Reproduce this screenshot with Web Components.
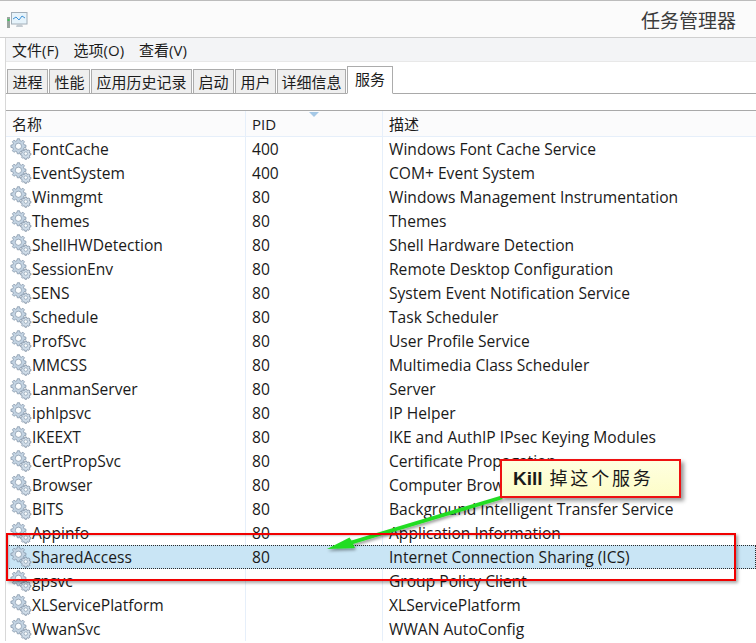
<!DOCTYPE html>
<html>
<head>
<meta charset="utf-8">
<title>任务管理器</title>
<style>
  html, body { margin: 0; padding: 0; background: #fff; height: 100%; overflow: hidden; }
</style>
</head>
<body>
<task-manager></task-manager>

<template id="gear-tpl">
  <svg width="22" height="22" viewBox="0 0 24 24">
    <g fill="#c3d3e2" stroke="#7d90a4" stroke-width=".8">
      <path d="M8 .8h2.400l.4 2 1.600.7 1.700-1.100 1.700 1.700-1.100 1.700.7 1.600 2 .4v2.400l-2 .4-.7 1.600 1.100 1.700-1.700 1.700-1.700-1.100-1.600.7-.4 2H8l-.4-2-1.600-.7-1.700 1.100-1.700-1.700 1.100-1.700-.7-1.600-2-.4V7.800l2-.4.7-1.600-1.100-1.700 1.700-1.700 1.700 1.100 1.600-.7z"/>
    </g>
    <circle cx="9.200" cy="9" r="3.400" fill="#fbfdfe" stroke="#8496a9" stroke-width=".8"/>
    <g fill="#cfdce8" stroke="#74879b" stroke-width=".8" transform="translate(1 1)">
      <path d="M15.300 11h1.800l.3 1.300 1 .4 1.100-.7 1.300 1.300-.7 1.100.4 1 1.300.3v1.800l-1.300.3-.4 1 .7 1.100-1.300 1.300-1.100-.7-1 .4-.3 1.300h-1.800l-.3-1.300-1-.4-1.100.7-1.300-1.300.7-1.100-.4-1-1.300-.3v-1.800l1.300-.3.4-1-.7-1.100 1.300-1.300 1.100.7 1-.4z"/>
    </g>
    <circle cx="17.200" cy="17" r="1.900" fill="#fbfdfe" stroke="#8496a9" stroke-width=".7"/>
  </svg>
</template>

<script>
const CJK = '"Noto Sans CJK SC", sans-serif';
const UI_FONT = `"Open Sans", ${CJK}`;

class TitleBar extends HTMLElement {
  constructor() {
    super();
    const shadow = this.attachShadow({ mode: 'open' });
    shadow.innerHTML = `
      <style>
        :host {
          display: flex;
          box-sizing: border-box;
          height: 38px;
          align-items: center;
          justify-content: space-between;
          padding: 0 20px 0 7px;
          background: #fbfbfb;
          border-top: 1px solid #bcbcbc;
          border-bottom: 1px solid #cfcfcf;
        }
        svg { display: block; margin-top: 1px; }
        span { font: 19px/1 ${CJK}; color: #3c3c3c; }
      </style>
      <svg width="21" height="18" viewBox="0 0 21 18">
        <rect x="0" y="6" width="3" height="11" fill="#9aa5a0"/>
        <rect x=".5" y="8" width="2" height="2" fill="#3fc45a"/>
        <rect x="4.500" y="1.500" width="15.500" height="11.500" fill="#e6f3fb" stroke="#a2aeb8"/>
        <path d="M6 8l3-2 3 3 3-4 3 2" fill="none" stroke="#3f93d8" stroke-width="1"/>
        <path d="M10 13h5l1 3H9z" fill="#c5ccd2"/>
      </svg>
      <span><slot></slot></span>
    `;
  }
}

class MenuBar extends HTMLElement {
  constructor() {
    super();
    const shadow = this.attachShadow({ mode: 'open' });
    shadow.innerHTML = `
      <style>
        :host {
          display: flex;
          box-sizing: border-box;
          height: 24px;
          gap: 15px;
          align-items: center;
          padding: 2px 0 0 6px;
          background: #f3f4f6;
          border-bottom: 1px solid #e8e8e8;
          font: 15px/1 ${UI_FONT};
          color: #1c1c1c;
        }
      </style>
      <slot></slot>
    `;
  }
}

class TabStrip extends HTMLElement {
  constructor() {
    super();
    const shadow = this.attachShadow({ mode: 'open' });
    shadow.innerHTML = `
      <style>
        :host {
          display: flex;
          box-sizing: border-box;
          height: 32px;
          align-items: flex-end;
          gap: 1px;
          padding-left: 1px;
          border-bottom: 1px solid #a9a9a9;
          background: #fff;
        }
      </style>
      <slot></slot>
    `;
  }
}

class TabItem extends HTMLElement {
  constructor() {
    super();
    const shadow = this.attachShadow({ mode: 'open' });
    shadow.innerHTML = `
      <style>
        :host {
          display: flex;
          box-sizing: border-box;
          height: 25px;
          margin-bottom: -1px;
          align-items: center;
          justify-content: center;
          background: #efefef;
          border: 1px solid #acacac;
          font: 15px/1 ${CJK};
          color: #1c1c1c;
        }
        :host([active]) {
          height: 28px;
          background: #fff;
          border-bottom-color: #fff;
          padding-bottom: 3px;
        }
      </style>
      <slot></slot>
    `;
  }
}

class HeaderRow extends HTMLElement {
  constructor() {
    super();
    const shadow = this.attachShadow({ mode: 'open' });
    shadow.innerHTML = `
      <style>
        :host {
          display: grid;
          grid-template-columns: 239px 137px 1fr;
          box-sizing: border-box;
          height: 27px;
          margin-top: 16px;
          background: #fbfbfc;
          border-top: 1px solid #a9a9a9;
          border-bottom: 1px solid #e6effa;
          font: 15px/27px ${UI_FONT};
          color: #1c1c1c;
        }
        div { height: 25px; padding-left: 6px; position: relative; }
        div + div { border-left: 1px solid #e6effa; }
        i {
          position: absolute; left: 63px; top: 1px;
          border: 5px solid transparent; border-top-color: #a5c8e6; border-bottom: 0;
        }
      </style>
      <div>名称</div><div>PID<i></i></div><div>描述</div>
    `;
  }
}

class SvcRow extends HTMLElement {
  constructor() {
    super();
    const shadow = this.attachShadow({ mode: 'open' });
    shadow.innerHTML = `
      <style>
        :host {
          display: grid;
          grid-template-columns: 239px 137px 1fr;
          box-sizing: border-box;
          height: 24px;
          font: 15.600px/24px ${UI_FONT};
          color: #1a1a1a;
          white-space: nowrap;
        }
        :host([selected]) {
          background: #c9e5f5;
          outline: 1px dotted #2a2a2a;
          outline-offset: -1px;
          margin-left: 1px;
          grid-template-columns: 238px 137px 1fr;
        }
        .name { display: flex; align-items: center; padding-left: 4px; }
        :host([selected]) .name { padding-left: 3px; }
        .name svg { display: block; flex: none; }
        .pid, .desc { padding-left: 6px; border-left: 1px solid #e6effa; }
        :host([selected]) .pid, :host([selected]) .desc { border-left-color: transparent; }
      </style>
      <div class="name"></div><div class="pid"></div><div class="desc"></div>
    `;
    const gear = document.getElementById('gear-tpl').content.cloneNode(true);
    shadow.querySelector('.name').appendChild(gear);
    this._shadow = shadow;
  }
  connectedCallback() {
    const name = document.createElement('span');
    name.textContent = this.getAttribute('name');
    this._shadow.querySelector('.name').appendChild(name);
    this._shadow.querySelector('.pid').textContent = this.getAttribute('pid') || '';
    this._shadow.querySelector('.desc').textContent = this.getAttribute('desc') || '';
  }
}

// callout + red frame + arrow drawn over the screenshot
class MarkupLayer extends HTMLElement {
  constructor() {
    super();
    const shadow = this.attachShadow({ mode: 'open' });
    shadow.innerHTML = `
      <style>
        :host { position: absolute; inset: 0; display: block; pointer-events: none; }
        .frame {
          position: absolute; left: 6px; top: 533px; width: 730px; height: 48px;
          box-sizing: border-box;
          border: 2px solid #f00000;
          box-shadow: 2px 2px 3px rgba(0,0,0,.35), inset 1px 1px 2px rgba(0,0,0,.2);
        }
        .note {
          position: absolute; left: 500px; top: 459px; width: 181px; height: 39px;
          box-sizing: border-box;
          border: 2px solid #ee1111;
          background: linear-gradient(#ffffe0, #fdfdc8);
          box-shadow: 3px 3px 4px rgba(0,0,0,.4);
          display: flex; align-items: center; padding-left: 11px;
          font: 18px/1 "Liberation Sans", ${CJK};
          color: #1a1a1a;
        }
        .note b { font-size: 19px; font-weight: bold; margin-right: 7px; }
        .note span { letter-spacing: 2.800px; }
        svg { position: absolute; left: 0; top: 0; }
      </style>
      <svg width="756" height="643" viewBox="0 0 756 643">
        <defs>
          <filter id="sh" x="-10%" y="-10%" width="130%" height="130%">
            <feDropShadow dx="1" dy="2" stdDeviation="1.500" flood-color="#000" flood-opacity=".4"/>
          </filter>
        </defs>
        <path d="M500 496L351.500 540.500L349.500 537.500L327 549L355 548L353 544L503 499z" fill="#22dd22" filter="url(#sh)"/>
      </svg>
      <div class="frame"></div>
      <div class="note"><b>Kill</b><span>掉这个服务</span></div>
    `;
  }
}

const services = [
  ['FontCache', '400', 'Windows Font Cache Service'],
  ['EventSystem', '400', 'COM+ Event System'],
  ['Winmgmt', '80', 'Windows Management Instrumentation'],
  ['Themes', '80', 'Themes'],
  ['ShellHWDetection', '80', 'Shell Hardware Detection'],
  ['SessionEnv', '80', 'Remote Desktop Configuration'],
  ['SENS', '80', 'System Event Notification Service'],
  ['Schedule', '80', 'Task Scheduler'],
  ['ProfSvc', '80', 'User Profile Service'],
  ['MMCSS', '80', 'Multimedia Class Scheduler'],
  ['LanmanServer', '80', 'Server'],
  ['iphlpsvc', '80', 'IP Helper'],
  ['IKEEXT', '80', 'IKE and AuthIP IPsec Keying Modules'],
  ['CertPropSvc', '80', 'Certificate Propagation'],
  ['Browser', '80', 'Computer Browser'],
  ['BITS', '80', 'Background Intelligent Transfer Service'],
  ['Appinfo', '80', 'Application Information'],
  ['SharedAccess', '80', 'Internet Connection Sharing (ICS)'],
  ['gpsvc', '', 'Group Policy Client'],
  ['XLServicePlatform', '', 'XLServicePlatform'],
  ['WwanSvc', '', 'WWAN AutoConfig'],
];

class TaskManager extends HTMLElement {
  constructor() {
    super();
    const shadow = this.attachShadow({ mode: 'open' });
    const rows = services.map(s =>
      `<svc-row name="${s[0]}" pid="${s[1]}" desc="${s[2]}"${s[0] === 'SharedAccess' ? ' selected' : ''}></svc-row>`
    ).join('');
    shadow.innerHTML = `
      <style>
        :host { display: block; position: relative; width: 756px; height: 643px; overflow: hidden; background: #fff; }
        .body { margin-left: 5px; border-left: 1px solid #d8d8d8; }
      </style>
      <title-bar>任务管理器</title-bar>
      <div class="body">
        <menu-bar><span>文件(F)</span><span>选项(O)</span><span>查看(V)</span></menu-bar>
        <tab-strip>
          <tab-item style="width:41px">进程</tab-item>
          <tab-item style="width:41px">性能</tab-item>
          <tab-item style="width:101px">应用历史记录</tab-item>
          <tab-item style="width:41px">启动</tab-item>
          <tab-item style="width:41px">用户</tab-item>
          <tab-item style="width:69px">详细信息</tab-item>
          <tab-item style="width:46px" active>服务</tab-item>
        </tab-strip>
        <header-row></header-row>
        ${rows}
      </div>
      <markup-layer></markup-layer>
    `;
  }
}

customElements.define('title-bar', TitleBar);
customElements.define('menu-bar', MenuBar);
customElements.define('tab-strip', TabStrip);
customElements.define('tab-item', TabItem);
customElements.define('header-row', HeaderRow);
customElements.define('svc-row', SvcRow);
customElements.define('markup-layer', MarkupLayer);
customElements.define('task-manager', TaskManager);
</script>
</body>
</html>
